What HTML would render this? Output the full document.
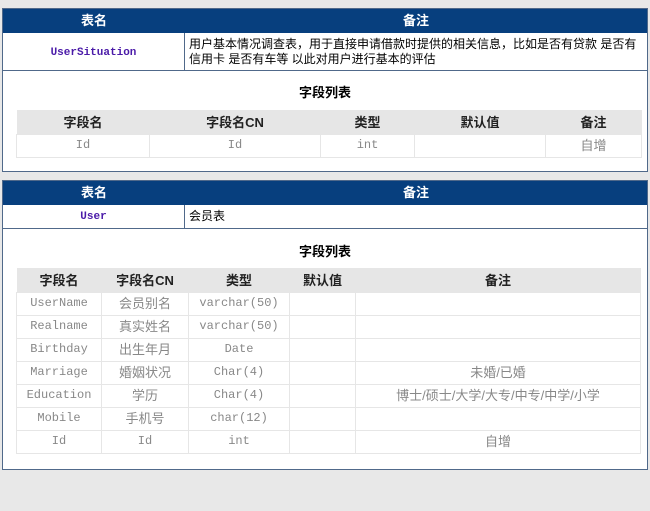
<!DOCTYPE html>
<html><head><meta charset="utf-8">
<style>
*{margin:0;padding:0;box-sizing:border-box}
body{width:650px;height:511px;background:#e8e8e8;position:relative;overflow:hidden;font-family:"Liberation Sans","Noto Sans CJK SC",sans-serif;font-size:12px;color:#000}
.blk{position:absolute;left:2px;width:646px;background:#fff;border:1px solid #50698a}
.hd{position:absolute;left:0;right:0;height:24px;background:#073f7e;color:#fff;font-weight:bold;font-size:13px}
.hd div{position:absolute;top:0;line-height:24px;text-align:center}
.r{position:absolute;left:0;right:0;border-bottom:1px solid #50698a}
.nm{position:absolute;left:0;width:182px;top:0;bottom:0;border-right:1px solid #50698a;display:flex;align-items:center;justify-content:center;color:#4a1aa8;font-weight:bold;font-family:"Liberation Mono",monospace;font-size:11px}
.ds{position:absolute;left:186px;right:2px;top:4px;line-height:15px;font-size:12px}
.ttl{position:absolute;left:0;right:0;text-align:center;font-weight:bold;font-size:13px}
table{position:absolute;border-collapse:collapse;table-layout:fixed}
th{background:#e6e6e6;font-weight:bold;font-size:13px;color:#222;height:24px}
td{border:1px solid #e6e6e6;text-align:center;vertical-align:middle;color:#888;height:23px;font-size:12px;line-height:21px;font-family:"Liberation Mono","Noto Sans CJK SC",monospace}
td.c{font-family:"Liberation Sans","Noto Sans CJK SC",sans-serif;font-size:13px}
</style></head><body>

<div class="blk" style="top:8px;height:164px">
  <div class="hd" style="top:0"><div style="left:0;width:182px">表名</div><div style="left:182px;right:0">备注</div></div>
  <div class="r" style="top:24px;height:38px"><div class="nm" style="padding-top:3px">UserSituation</div><div class="ds">用户基本情况调查表，用于直接申请借款时提供的相关信息，比如是否有贷款 是否有信用卡 是否有车等 以此对用户进行基本的评估</div></div>
  <div class="ttl" style="top:73px">字段列表</div>
  <table style="left:13px;top:101px;width:625px">
    <colgroup><col style="width:133px"><col style="width:171px"><col style="width:94px"><col style="width:131px"><col style="width:96px"></colgroup>
    <tr><th>字段名</th><th>字段名CN</th><th>类型</th><th>默认值</th><th>备注</th></tr>
    <tr><td>Id</td><td>Id</td><td>int</td><td></td><td class="c">自增</td></tr>
  </table>
</div>

<div class="blk" style="top:180px;height:290px">
  <div class="hd" style="top:0"><div style="left:0;width:182px">表名</div><div style="left:182px;right:0">备注</div></div>
  <div class="r" style="top:24px;height:24px"><div class="nm">User</div><div class="ds" style="top:4px">会员表</div></div>
  <div class="ttl" style="top:60px">字段列表</div>
  <table style="left:13px;top:87px;width:625px">
    <colgroup><col style="width:85px"><col style="width:87px"><col style="width:101px"><col style="width:66px"><col></colgroup>
    <tr><th>字段名</th><th>字段名CN</th><th>类型</th><th>默认值</th><th>备注</th></tr>
    <tr><td>UserName</td><td class="c">会员别名</td><td>varchar(50)</td><td></td><td></td></tr>
    <tr><td>Realname</td><td class="c">真实姓名</td><td>varchar(50)</td><td></td><td></td></tr>
    <tr><td>Birthday</td><td class="c">出生年月</td><td>Date</td><td></td><td></td></tr>
    <tr><td>Marriage</td><td class="c">婚姻状况</td><td>Char(4)</td><td></td><td class="c">未婚/已婚</td></tr>
    <tr><td>Education</td><td class="c">学历</td><td>Char(4)</td><td></td><td class="c">博士/硕士/大学/大专/中专/中学/小学</td></tr>
    <tr><td>Mobile</td><td class="c">手机号</td><td>char(12)</td><td></td><td></td></tr>
    <tr><td>Id</td><td>Id</td><td>int</td><td></td><td class="c">自增</td></tr>
  </table>
</div>

</body></html>
